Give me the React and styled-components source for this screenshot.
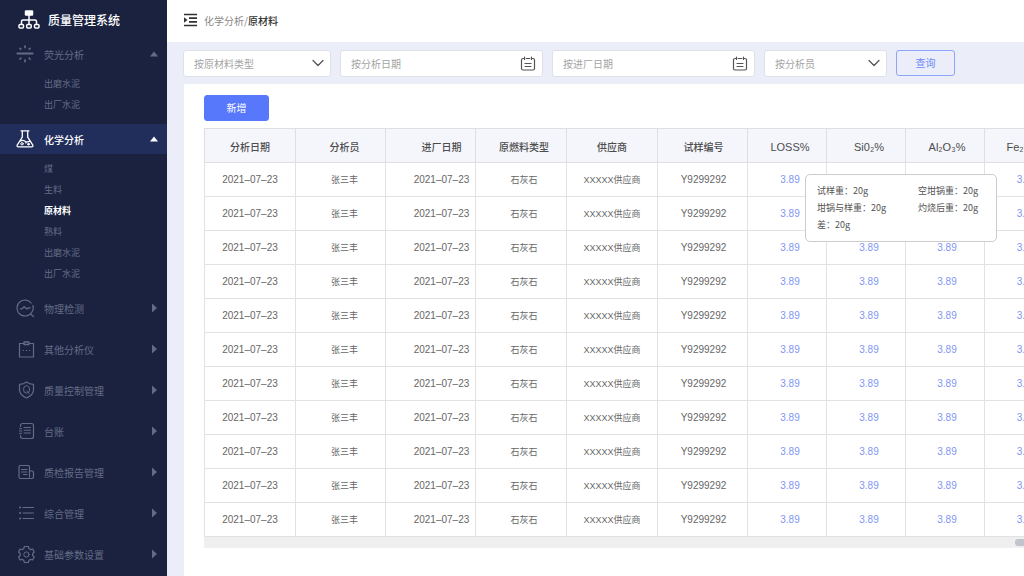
import React, { useState } from "react";
import styled, { createGlobalStyle } from "styled-components";

// CSS
const GlobalStyle = createGlobalStyle`
  * {
    box-sizing: border-box;
  }

  body {
    margin: 0;
    overflow-x: hidden;
    background: #ffffff;
    color: #555555;
    font-family: "Liberation Sans", "Noto Sans CJK SC", sans-serif;
    font-size: 10px;
  }

  button, input, select {
    font-family: inherit;
    font-size: inherit;
  }
`;

const Layout = styled.div`
  display: flex;
  min-height: 100vh;
`;

const Sidebar = styled.aside`
  flex: 0 0 167px;
  background: #1a2240;
  color: #646c85;
  font-family: "Noto Sans CJK SC", sans-serif;
`;

const Brand = styled.div`
  display: flex;
  align-items: center;
  gap: 8px;
  height: 39px;
  padding-left: 18px;
  color: #ffffff;
  font-size: 12px;
  font-weight: 500;
`;

const Nav = styled.nav`
  display: flex;
  flex-direction: column;
`;

const NavGroup = styled.div`
  margin-bottom: ${(props) => (props.$open ? 9 : 11)}px;
`;

const NavItem = styled.button`
  display: flex;
  align-items: center;
  gap: 10px;
  width: 100%;
  height: 30px;
  padding: 0 9px 0 16px;
  border: none;
  background: ${(props) => (props.$active ? '#212d5b' : 'none')};
  color: ${(props) => (props.$active ? '#ffffff' : 'inherit')};
  font-weight: ${(props) => (props.$active ? 500 : 400)};
  text-align: left;
  cursor: pointer;
`;

const NavLabel = styled.span`
  flex: 1;
`;

const SubMenu = styled.div`
  display: flex;
  flex-direction: column;
  padding-top: 4px;
`;

const SubLink = styled.a`
  padding-left: 44px;
  color: ${(props) => (props.$active ? '#ffffff' : 'inherit')};
  font-size: 9px;
  font-weight: ${(props) => (props.$active ? 700 : 400)};
  line-height: 21px;
  text-decoration: none;
`;

const Icon = styled.svg`
  flex: none;
  fill: none;
  stroke: currentColor;
  stroke-linecap: round;
  stroke-linejoin: round;
`;

const Main = styled.main`
  display: flex;
  flex: 1;
  flex-direction: column;
  min-width: 0;
  background: #ebeef8;
`;

const TopBar = styled.header`
  display: flex;
  align-items: center;
  gap: 6px;
  height: 42px;
  padding: 0 16px 2px;
  background: #ffffff;
  font-family: "Noto Sans CJK SC", sans-serif;
`;

const Crumb = styled.div`
  color: #888888;

  b {
    color: #333333;
    font-weight: 500;
  }
`;

const FilterBar = styled.form`
  display: flex;
  gap: 9px;
  height: 42px;
  padding: 8px 16px 0;
  font-family: "Noto Sans CJK SC", sans-serif;
`;

const Field = styled.div`
  position: relative;
  flex: none;
  width: ${(props) => props.$width}px;
  height: 27px;
  color: #555555;

  svg {
    position: absolute;
    top: 5px;
    right: 7px;
    pointer-events: none;
  }
`;

const Control = styled.input`
  width: 100%;
  height: 100%;
  padding: 0 10px 1px;
  border: 1px solid #dfe1e8;
  border-radius: 3px;
  outline: none;
  appearance: none;
  background: #ffffff;
  color: #a3a3a3;

  &::placeholder {
    color: #a3a3a3;
  }
`;

const Btn = styled.button`
  flex: none;
  border: 1px solid ${(props) => (props.$primary ? '#5878fb' : '#8ea3fa')};
  border-radius: 3px;
  background: ${(props) => (props.$primary ? '#5878fb' : '#ebeef8')};
  color: ${(props) => (props.$primary ? '#ffffff' : '#6f89f8')};
  width: ${(props) => (props.$primary ? 65 : 59)}px;
  height: 26px;
  padding: 0 6px 1px;
  font-family: "Noto Sans CJK SC", sans-serif;
  cursor: pointer;
`;

const Card = styled.section`
  flex: 1;
  margin-left: 17px;
  padding: 11px 0 0 20px;
  background: #ffffff;
`;

const TableWrap = styled.div`
  margin-top: 7px;
  overflow: hidden;
`;

const Table = styled.table`
  width: 860px;
  border-collapse: collapse;
  table-layout: fixed;
`;

const Th = styled.th`
  height: 34px;
  padding: 2px 0 0 ${(props) => props.$shift}px;
  border: 1px solid #dfdfe2;
  background: #f5f6fc;
  color: #4c4c4c;
  font-size: ${(props) => (props.$latin ? 11 : 10)}px;
  font-weight: ${(props) => (props.$latin ? 400 : 500)};
  white-space: nowrap;
`;

const Td = styled.td`
  position: relative;
  height: 34px;
  padding: 0 0 0 ${(props) => props.$shift}px;
  border: 1px solid #e2e2e2;
  color: #666666;
  font-size: ${(props) => (props.$cjk ? 9 : 10)}px;
  text-align: center;
  white-space: nowrap;
`;

const ValueLink = styled.a`
  color: #8296f5;
  text-decoration: none;
`;

const Tooltip = styled.div`
  position: absolute;
  top: 11px;
  left: 57px;
  z-index: 1;
  display: grid;
  grid-template-columns: 101px 1fr;
  width: 192px;
  padding: 7px 0 8px 11px;
  border: 1px solid #cccccc;
  border-radius: 5px;
  background: #ffffff;
  color: #555555;
  font-family: "Noto Sans CJK SC", sans-serif;
  font-size: 9px;
  line-height: 17px;
  text-align: left;
`;

const ScrollTrack = styled.div`
  display: flex;
  align-items: center;
  justify-content: flex-end;
  height: 11px;
  background: #efefef;
`;

const ScrollThumb = styled.div`
  width: 9px;
  height: 7px;
  border-radius: 4px 0 0 4px;
  background: #c1c4ca;
`;

// icons
const icons = {
  light: (
    <>
      <path d="M1.5 8.5h15" strokeWidth="2.2" />
      <path d="M9 1v1.4M9 15v1.6M4 3.3l.7.8M14 3.3l-.7.8M4 14l.7-.8M14 14l-.7-.8" strokeWidth="1.7" />
    </>
  ),
  flask: (
    <>
      <path d="M5 .8h8M6.3 1v6.2L1.2 15.200c-.5 1 .1 1.600 1.100 1.600h13.400c1 0 1.600-.6 1.100-1.600l-5.100-8V1M4 11.200c2-1.200 3.600-.9 5 0s3.200.9 5 0" strokeWidth="1.3" />
      <circle cx="6" cy="13.800" r="1.200" />
      <circle cx="12.500" cy="14.200" r=".9" fill="currentColor" />
      <circle cx="9.800" cy="12.800" r=".3" />
    </>
  ),
  inspect: (
    <>
      <path d="M15.2 4A8 8 0 1 0 14 15.2M16.9 6.5a8 8 0 0 1-2.500 8.200l3 2.800" strokeWidth="1.2" />
      <path d="M4.300 9.800h1.900L8 7.600l2.800 2.500 1.400-1.200h1.900" strokeWidth="1.3" />
    </>
  ),
  clipboard: (
    <>
      <path d="M7.500 3.500h-4v13.500h14V3.500h-4" strokeWidth="1.2" strokeLinejoin="miter" />
      <path d="M8 2h5v2.500H8z" strokeWidth="1.3" />
      <path d="M7.300 10.500h.2M10.400 10.500h.2M13.500 10.500h.2" strokeWidth="1.2" />
    </>
  ),
  shield: (
    <>
      <path d="M10.500 1c2 1.600 4.300 2.300 7 2.300v5.500c0 4-3 6.500-7 8.200-4-1.700-7-4.200-7-8.200V3.300c2.700 0 5-.7 7-2.300z" strokeWidth="1.2" />
      <ellipse cx="10.500" cy="8.400" rx="3" ry="3.700" />
      <path d="M10.800 10.300l2.500 2.200" />
    </>
  ),
  ledger: (
    <>
      <path d="M4.500 4.500v-1c0-1 .8-2 2-2h9c1.200 0 2 1 2 2v11c0 1-.8 2-2 2h-9c-1.200 0-2-1-2-2v-1" strokeWidth="1.2" />
      <path d="M3.500 6.700h2.200M3.500 9h2.200M3.500 11.300h2.200M8 5.500h6.500M8 8.200h6.500M8 11h6.500" />
    </>
  ),
  report: (
    <>
      <path d="M13.500 15.500h-9c-1 0-1.500-.6-1.500-1.500V4c0-1 .5-1.500 1.500-1.500H12c1 0 1.500.5 1.500 1.500v10M13.500 8h2.500c1 0 1.500.5 1.500 1.500v4c0 1.200-.6 2-1.500 2h-2.500" strokeWidth="1.2" />
      <path d="M5.500 6.500H11M5.500 9H11M7.500 11.500H11" />
    </>
  ),
  list: (
    <>
      <path d="M7 3.500h10.500M7 9h10.500M7 14.500h10.500" strokeWidth="1.2" />
      <path d="M4 3.500h.2M4 9h.2M4 14.500h.2" strokeWidth="1.8" />
    </>
  ),
  gear: (
    <>
      <path d="M8.400 1.500h4l.6 2.200 1.500.9 2.200-.6 1.500 3-1.600 1.700v1.600l1.600 1.700-1.500 3-2.200-.6-1.500.9-.6 2.200h-4l-.6-2.200-1.500-.9-2.200.6-1.500-3 1.600-1.700V8.700L2.600 7l1.500-3 2.200.6 1.500-.9z" strokeWidth="1.2" />
      <circle cx="10.400" cy="9.500" r="2.600" />
    </>
  ),
};

const menus = [
  { name: '荧光分析', icon: 'light', children: ['出磨水泥', '出厂水泥'] },
  {
    name: '化学分析',
    icon: 'flask',
    children: ['煤', '生料', '原材料', '熟料', '出磨水泥', '出厂水泥'],
  },
  { name: '物理检测', icon: 'inspect' },
  { name: '其他分析仪', icon: 'clipboard' },
  { name: '质量控制管理', icon: 'shield' },
  { name: '台账', icon: 'ledger' },
  { name: '质检报告管理', icon: 'report' },
  { name: '综合管理', icon: 'list' },
  { name: '基础参数设置', icon: 'gear' },
];

// shift: left padding of the column
const columns = [
  { title: '分析日期', key: 'analysisDate', width: 91, shift: 0 },
  { title: '分析员', key: 'analyst', width: 90, shift: 8, cjk: true },
  { title: '进厂日期', key: 'arrivalDate', width: 90, shift: 22 },
  { title: '原燃料类型', key: 'type', width: 91, shift: 6, cjk: true },
  { title: '供应商', key: 'supplier', width: 91, shift: 0, cjk: true },
  { title: '试样编号', key: 'sampleNo', width: 90, shift: 2 },
  { title: 'LOSS%', key: 'loss', width: 79, shift: 6, latin: true },
  { title: 'Si0₂%', key: 'sio2', width: 79, shift: 6, latin: true },
  { title: 'Al₂O₃%', key: 'al2o3', width: 79, shift: 4, latin: true },
  { title: 'Fe₂O₃%', key: 'fe2o3', width: 80, shift: 4, latin: true },
];

const rows = Array.from({ length: 11 }, (_, i) => ({
  id: i,
  analysisDate: '2021–07–23',
  analyst: '张三丰',
  arrivalDate: '2021–07–23',
  type: '石灰石',
  supplier: 'XXXXX供应商',
  sampleNo: 'Y9299292',
  loss: '3.89',
  sio2: '3.89',
  al2o3: '3.89',
  fe2o3: '3.89',
}));

const weights = ['试样重：20g', '空坩锅重：20g', '坩锅与样重：20g', '灼烧后重：20g', '差：20g'];

const Arrow = ({ open }) => (
  <svg width="8" height="10" fill="currentColor">
    <path d={open ? 'M4 2.5L8 7.5H0z' : 'M2 .5L7 5 2 9.5z'} />
  </svg>
);

const SelectField = ({ label, width }) => (
  <Field $width={width}>
    <Control as="select" aria-label={label}>
      <option>{label}</option>
    </Control>
    <Icon width="12" height="16">
      <path d="M1 5.500l5 5 5-5" strokeWidth="1.3" />
    </Icon>
  </Field>
);

const DateField = ({ label, width }) => (
  <Field $width={width}>
    <Control type="text" aria-label={label} placeholder={label} />
    <Icon width="16" height="17">
      <path d="M3.500 3.500H3C1.800 3.500 1.500 4 1.500 5v8.500c0 1 .4 1.500 1.500 1.500h10c1.100 0 1.500-.5 1.500-1.500V5c0-1-.3-1.500-1.500-1.500h-.5M6.200 3.500h3.600M4.500 2v2.500M11.500 2v2.500M5 8.500h6M5 11.500h6" strokeWidth="1.2" />
    </Icon>
  </Field>
);

const App = () => {
  const [openMenus, setOpenMenus] = useState(['荧光分析', '化学分析']);

  const handleMenuClick = (name) => {
    if (openMenus.includes(name)) {
      setOpenMenus(openMenus.filter((item) => item !== name));
    } else {
      setOpenMenus([...openMenus, name]);
    }
  };

  return (
    <Layout>
      <GlobalStyle />
      <Sidebar>
        <Brand>
          <Icon width="22" height="20" strokeWidth="1.5">
            <rect x="7.5" y="1" width="7" height="4" rx=".5" fill="currentColor" />
            <path d="M11 5v9M3.500 14v-2.500c0-1 .5-1.500 1.500-1.500h12c1 0 1.500.5 1.500 1.500V14" />
            <rect x="1" y="14.5" width="4.5" height="3.5" rx="1" />
            <rect x="8.7" y="14.5" width="4.5" height="3.5" rx="1" />
            <rect x="16.5" y="14.5" width="4.5" height="3.5" rx="1" />
          </Icon>
          质量管理系统
        </Brand>
        <Nav>
          {menus.map((menu) => {
            const open = Boolean(menu.children) && openMenus.includes(menu.name);
            const active = menu.name === '化学分析';

            return (
              <NavGroup key={menu.name} $open={open}>
                <NavItem type="button" $active={active} onClick={() => handleMenuClick(menu.name)}>
                  <Icon width="18" height="18" viewBox="0 0 18 18" overflow="visible">
                    {icons[menu.icon]}
                  </Icon>
                  <NavLabel>{menu.name}</NavLabel>
                  <Arrow open={open} />
                </NavItem>
                {open && (
                  <SubMenu>
                    {menu.children.map((child) => (
                      <SubLink key={child} href="#" $active={child === '原材料'}>
                        {child}
                      </SubLink>
                    ))}
                  </SubMenu>
                )}
              </NavGroup>
            );
          })}
        </Nav>
      </Sidebar>
      <Main>
        <TopBar>
          <Icon width="15" height="14" color="#333333">
            <path d="M1 1.500h13M6 5.200h8M6 8.800h8M1 12.500h13" strokeWidth="1.7" strokeLinecap="butt" />
            <path d="M1 4.200L4.500 7 1 9.800z" fill="currentColor" stroke="none" />
          </Icon>
          <Crumb>化学分析/<b>原材料</b></Crumb>
        </TopBar>
        <FilterBar onSubmit={(e) => e.preventDefault()}>
          <SelectField label="按原材料类型" width={148} />
          <DateField label="按分析日期" width={203} />
          <DateField label="按进厂日期" width={203} />
          <SelectField label="按分析员" width={123} />
          <Btn type="submit">查询</Btn>
        </FilterBar>
        <Card>
          <Btn type="button" $primary>新增</Btn>
          <TableWrap>
            <Table>
              <colgroup>
                {columns.map((col) => (
                  <col key={col.key} width={col.width} />
                ))}
              </colgroup>
              <thead>
                <tr>
                  {columns.map((col) => (
                    <Th key={col.key} $shift={col.shift} $latin={col.latin}>{col.title}</Th>
                  ))}
                </tr>
              </thead>
              <tbody>
                {rows.map((row) => (
                  <tr key={row.id}>
                    {columns.map((col) => (
                      <Td key={col.key} $shift={col.shift} $cjk={col.cjk}>
                        {col.latin ? <ValueLink href="#">{row[col.key]}</ValueLink> : row[col.key]}
                        {row.id === 0 && col.key === 'loss' && (
                          <Tooltip role="tooltip">
                            {weights.map((text) => (
                              <span key={text}>{text}</span>
                            ))}
                          </Tooltip>
                        )}
                      </Td>
                    ))}
                  </tr>
                ))}
              </tbody>
            </Table>
            <ScrollTrack>
              <ScrollThumb />
            </ScrollTrack>
          </TableWrap>
        </Card>
      </Main>
    </Layout>
  );
};

export default App;
